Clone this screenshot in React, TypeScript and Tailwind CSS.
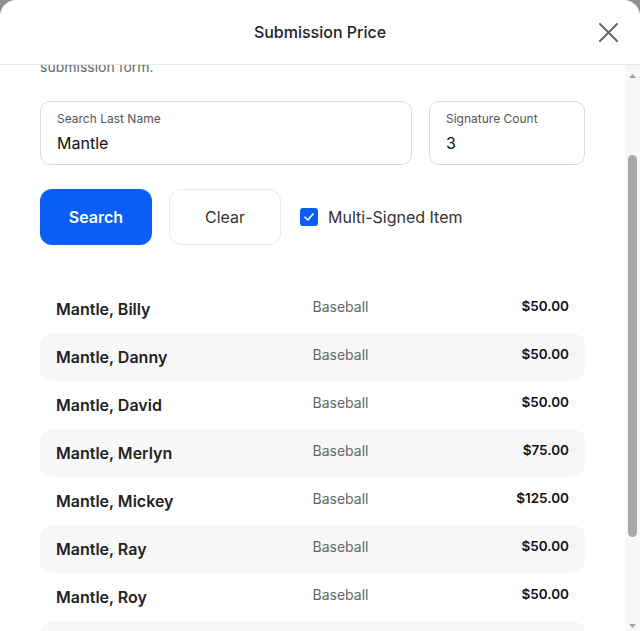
import React, { useLayoutEffect, useRef } from "react";

const rows = [
  { name: "Mantle, Billy", type: "Baseball", price: "$50.00" },
  { name: "Mantle, Danny", type: "Baseball", price: "$50.00" },
  { name: "Mantle, David", type: "Baseball", price: "$50.00" },
  { name: "Mantle, Merlyn", type: "Baseball", price: "$75.00" },
  { name: "Mantle, Mickey", type: "Baseball", price: "$125.00" },
  { name: "Mantle, Ray", type: "Baseball", price: "$50.00" },
  { name: "Mantle, Roy", type: "Baseball", price: "$50.00" },
  { name: "Mantle, Tommy", type: "Baseball", price: "$50.00" },
  { name: "Mantle, Will", type: "Baseball", price: "$50.00" },
];

export default function App() {
  const ref = useRef<HTMLDivElement>(null);
  useLayoutEffect(() => {
    if (ref.current) ref.current.scrollTop = 112;
  }, []);
  return (
    <div
      className="h-[631px] w-[640px] overflow-hidden bg-[#8f8f8f]"
      style={{ fontFamily: "Inter, 'Noto Sans', sans-serif" }}
    >
      <div className="flex h-[631px] w-full flex-col overflow-hidden rounded-t-2xl bg-white">
        <div className="relative flex h-[65px] shrink-0 items-center justify-center border-b border-[#e6e6e6]">
          <div className="text-[16px] font-medium text-[#222]">Submission Price</div>
          <button className="absolute right-[22px] top-[22px] flex h-5 w-5 items-center justify-center">
            <svg width="19" height="19" viewBox="0 0 19 19">
              <path d="M1 1L18 18M18 1L1 18" stroke="#666" strokeWidth="2" strokeLinecap="round" />
            </svg>
          </button>
        </div>
        <div className="flex min-h-0 flex-1">
          <div ref={ref} className="min-w-0 flex-1 overflow-hidden">
            <div className="px-10 pt-6 pb-[30px]">
              <p className="text-[14px] leading-5 text-[#666]">
                Search our catalog of verified signers to find the
                <br />
                current submission price for your autographed item.
                <br />
                Prices are listed per signature and may change based
                <br />
                on the number of signatures. Select a result to add it to
                <br />
                submission form.
              </p>
              <div className="mt-6 flex gap-[17px]">
                <div className="flex h-16 flex-1 flex-col justify-center rounded-[10px] border border-[#dcdcdc] px-4">
                  <div className="text-[12px] leading-4 text-[#555]">Search Last Name</div>
                  <div className="mt-1 text-[16px] leading-6 text-[#111]">Mantle</div>
                </div>
                <div className="flex h-16 w-[156px] flex-col justify-center rounded-[10px] border border-[#dcdcdc] px-4">
                  <div className="text-[12px] leading-4 text-[#555]">Signature Count</div>
                  <div className="mt-1 text-[16px] leading-6 text-[#111]">3</div>
                </div>
              </div>
              <div className="mt-6 flex items-center gap-[17px]">
                <button className="h-14 w-[112px] rounded-xl bg-[#0a5ef6] text-[16px] font-semibold text-white">
                  Search
                </button>
                <button className="h-14 w-[112px] rounded-xl border border-[#e8e8e8] bg-white text-[16px] text-[#333]">
                  Clear
                </button>
                <div className="ml-[2px] flex items-center gap-[10px]">
                  <div className="flex h-[18px] w-[18px] items-center justify-center rounded-[3px] bg-[#0a5ef6]">
                    <svg width="12" height="12" viewBox="0 0 12 12">
                      <path d="M2 6.2L4.8 9L10 3" stroke="white" strokeWidth="1.6" fill="none" strokeLinecap="round" strokeLinejoin="round" />
                    </svg>
                  </div>
                  <span className="text-[16px] text-[#333]">Multi-Signed Item</span>
                </div>
              </div>
              <div className="mt-10 flex flex-col">
                {rows.map((r, i) => (
                  <div
                    key={r.name}
                    className={
                      "grid h-12 grid-cols-2 items-center rounded-xl px-4 " +
                      (i % 2 === 1 ? "bg-[#f8f8f8]" : "bg-white")
                    }
                  >
                    <div className="text-[16px] font-semibold text-[#222]">{r.name}</div>
                    <div className="flex items-center justify-between pb-[6px]">
                      <span className="text-[14px] text-[#666]">{r.type}</span>
                      <span className="text-[13.5px] font-semibold text-[#111]">{r.price}</span>
                    </div>
                  </div>
                ))}
              </div>
            </div>
          </div>
          <div className="flex w-[15px] shrink-0 flex-col items-center bg-[#f8f8f8]">
            <svg className="mt-[9px]" width="7" height="4" viewBox="0 0 7 4">
              <path d="M3.5 0L7 4H0Z" fill="#a3a3a3" />
            </svg>
            <div className="mt-[77px] h-[382px] w-[9px] rounded-full bg-[#a8a8a8]" />
            <div className="flex-1" />
            <svg className="mb-[3px]" width="7" height="4" viewBox="0 0 7 4">
              <path d="M0 0H7L3.5 4Z" fill="#a3a3a3" />
            </svg>
          </div>
        </div>
      </div>
    </div>
  );
}
